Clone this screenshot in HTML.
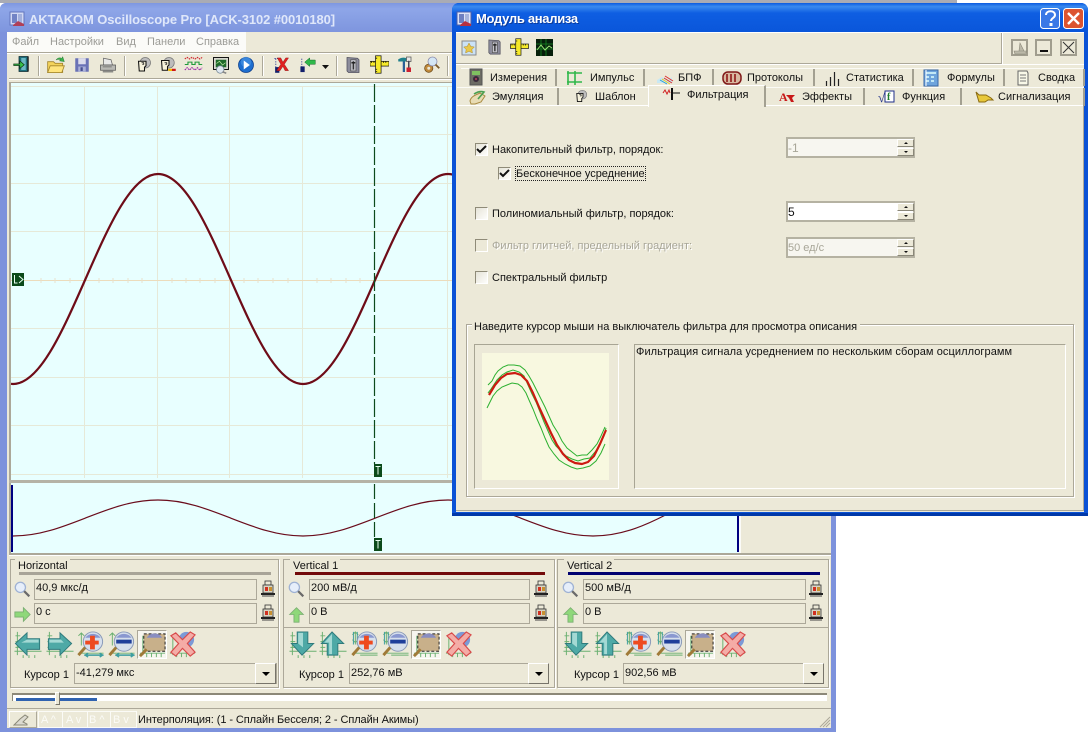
<!DOCTYPE html>
<html lang="ru"><head><meta charset="utf-8"><title>AKTAKOM Oscilloscope Pro</title>
<style>
html,body{margin:0;padding:0;background:#fff}
#r{position:relative;width:1090px;height:734px;overflow:hidden;background:#fff;font:11px/13px "Liberation Sans",sans-serif;color:#111}
.b{position:absolute;box-sizing:border-box}
.t{position:absolute;white-space:nowrap;font:11px/13px "Liberation Sans",sans-serif;color:#111}
.f{position:absolute;box-sizing:border-box;height:21px;border:1px solid #aca899;border-right-color:#aca899;background:#ece9d8}
.cb{position:absolute;box-sizing:border-box;width:13px;height:13px;border:1px solid;border-color:#8f8b78 #fff #fff #8f8b78;background:linear-gradient(135deg,#e6e4d8,#fdfdfb)}
.sp{position:absolute;box-sizing:border-box;width:129px;height:21px;border:2px solid #b5b2a2;background:#fff}
.ub{position:absolute;left:109px;width:17px;height:8px;box-sizing:border-box;background:#ece9d8;border:1px solid;border-color:#fff #8a8778 #8a8778 #fff}
.ub i{position:absolute;left:6px;width:0;height:0;border-left:2px solid transparent;border-right:2px solid transparent}
.u i{top:2px;border-bottom:2px solid #111}
.d i{top:2px;border-top:2px solid #111}
.sep{position:absolute;width:1px;background:#aca899;border-right:1px solid #fff}
.ts{position:absolute;width:2px;background:#a3a091}
.cbtn{position:absolute;box-sizing:border-box;width:21px;height:21px;background:#ece9d8;border:1px solid;border-color:#fff #77746a #77746a #fff}
.cbtn i{position:absolute;left:6px;top:8px;width:0;height:0;border-left:4px solid transparent;border-right:4px solid transparent;border-top:4px solid #000}
svg{position:absolute;left:0;top:0;overflow:visible}
</style></head><body><div id="r">

<!-- top strip -->
<div class="b" style="left:0;top:0;width:957px;height:3px;background:#a9abb4"></div>

<!-- MAIN WINDOW -->
<div class="b" style="left:0;top:3px;width:836px;height:729px;background:#7d92dc;border-radius:6px 6px 0 0"></div>
<div class="b" style="left:0;top:3px;width:836px;height:29px;background:linear-gradient(180deg,#7e97e0 0,#8ea6e8 20%,#7e95de 100%);border-radius:6px 6px 0 0"></div>
<div class="b" style="left:7px;top:32px;width:824px;height:696px;background:#ece9d8"></div>
<div class="t" style="left:29px;top:11px;font:bold 13px/18px 'Liberation Sans',sans-serif;color:#dfe7fa;letter-spacing:-.1px">AKTAKOM Oscilloscope Pro [ACK-3102 #0010180]</div>

<!-- menu -->
<div class="b" style="left:7px;top:32px;width:239px;height:20px;background:#fbfbf8"></div>
<div class="t" style="left:12px;top:36px;color:#9b9b96">Файл</div>
<div class="t" style="left:50px;top:36px;color:#9b9b96">Настройки</div>
<div class="t" style="left:116px;top:36px;color:#9b9b96">Вид</div>
<div class="t" style="left:147px;top:36px;color:#9b9b96">Панели</div>
<div class="t" style="left:196px;top:36px;color:#9b9b96">Справка</div>
<div class="b" style="left:7px;top:52px;width:824px;height:1px;background:#aca899"></div>
<div class="b" style="left:7px;top:53px;width:824px;height:1px;background:#fff"></div>
<div class="sep" style="left:38px;top:56px;height:20px"></div>
<div class="sep" style="left:124px;top:56px;height:20px"></div>
<div class="sep" style="left:262px;top:56px;height:20px"></div>
<div class="sep" style="left:336px;top:56px;height:20px"></div>
<div class="sep" style="left:447px;top:56px;height:20px"></div>

<!-- plot -->
<div class="b" style="left:9px;top:78px;width:822px;height:1px;background:#aca899"></div>
<div class="b" style="left:9px;top:79px;width:822px;height:1px;background:#fff"></div>
<div class="b" style="left:9px;top:82px;width:730px;height:398px;background:#e8ffff;border-top:1px solid #aca899;border-left:2px solid #aca899"></div>
<div class="b" style="left:9px;top:480px;width:730px;height:3px;background:#b5b3a6"></div>
<div class="b" style="left:9px;top:483px;width:730px;height:70px;background:#e8ffff;border-left:2px solid #aca899"></div>
<div class="b" style="left:11px;top:485px;width:2px;height:67px;background:#000080"></div>
<div class="b" style="left:737px;top:484px;width:2px;height:68px;background:#000080"></div>
<div class="b" style="left:739px;top:483px;width:2px;height:70px;background:#fbfbf8"></div>
<div class="b" style="left:9px;top:553px;width:822px;height:2px;background:#aca899"></div>
<div class="b" style="left:9px;top:555px;width:822px;height:1px;background:#fff"></div>

<svg width="1090" height="734" viewBox="0 0 1090 734">
<defs>
<symbol id="door" viewBox="0 0 24 24"><rect x="8" y="2" width="12" height="20" fill="#1d6f7d" stroke="#0c2a30"/><rect x="11" y="4" width="6" height="16" fill="#6db8c4"/><path d="M1 12h8V8l6 5-6 5v-4H1z" fill="#36c24a" stroke="#0f3a14"/><rect x="19" y="2" width="2" height="20" fill="#222"/></symbol>
<symbol id="folder" viewBox="0 0 24 24"><path d="M2 8h7l2 2h9v11H2z" fill="#f4d35a" stroke="#a4862a"/><path d="M2 21l3-8h17l-3 8z" fill="#ffe47c" stroke="#a4862a"/><path d="M12 6c2-3 5-3 7-2l1-2 2 6-6-1 2-1c-2-1-4-1-6 0z" fill="#38b04a" stroke="#1f6f2a" stroke-width=".5"/></symbol>
<symbol id="save" viewBox="0 0 24 24"><path d="M3 3h18v18H3z" fill="#6a72b6"/><rect x="7" y="3" width="10" height="8" fill="#dcdcec"/><rect x="7" y="14" width="10" height="7" fill="#aab0d8"/><rect x="10" y="15" width="3" height="5" fill="#464e90"/></symbol>
<symbol id="print" viewBox="0 0 24 24"><path d="M6 3l10 2 2 7H6z" fill="#e8e8e8" stroke="#666"/><path d="M2 12h20v7H2z" fill="#b8b8b4" stroke="#555"/><path d="M5 19h14v3H5z" fill="#8a8a86"/><rect x="5" y="14" width="12" height="1" fill="#666"/></symbol>
<symbol id="head" viewBox="0 0 24 24"><circle cx="15" cy="9" r="7" fill="#bdbdbd" stroke="#777"/><path d="M6 7h10v6l-2 2v5H7z" fill="#f6f2dc" stroke="#111" stroke-width="1.4"/><path d="M10 9h3v2h-2" fill="none" stroke="#111"/></symbol>
<symbol id="head2" viewBox="0 0 24 24"><circle cx="14" cy="9" r="7" fill="#bdbdbd" stroke="#777"/><path d="M4 6h10v6l-2 2v5H5z" fill="#f6f2dc" stroke="#111" stroke-width="1.4"/><path d="M8 9h3v2H9" fill="none" stroke="#111"/><rect x="13" y="17" width="5" height="3" fill="#f0b800"/><rect x="18" y="17" width="5" height="3" fill="#d01818"/></symbol>
<symbol id="waves" viewBox="0 0 24 24"><path d="M1 5l3-2 3 2 3-2 4 2 3-2 3 2 3-2" fill="none" stroke="#d0242c" stroke-width="1.4" stroke-dasharray="2 1"/><path d="M1 12h4V9h5v3h4V9h5v3h4" fill="none" stroke="#1f9a3a" stroke-width="1.4"/><path d="M1 19l3-3 3 3 3-3 4 3 3-3 3 3 3-3" fill="none" stroke="#9a27a8" stroke-width="1.4" stroke-dasharray="2 1"/></symbol>
<symbol id="mon" viewBox="0 0 24 24"><rect x="2" y="2" width="20" height="16" fill="#d8d8d0" stroke="#111" stroke-width="1.3"/><rect x="5" y="5" width="14" height="10" fill="#1f6a2a"/><path d="M6 10l4-3 4 5 4-3" stroke="#b8e8a0" fill="none"/><circle cx="11" cy="18" r="5" fill="#dfe8f0" stroke="#6c8090"/><path d="M14 21l5 2" stroke="#888" stroke-width="2"/></symbol>
<symbol id="play" viewBox="0 0 24 24"><circle cx="12" cy="12" r="10" fill="#1d6ecf" stroke="#0e3f8c"/><circle cx="12" cy="8" r="7" fill="#4c98e6" opacity=".6"/><path d="M9 6l8 6-8 6z" fill="#fff"/></symbol>
<symbol id="xr" viewBox="0 0 24 24"><path d="M4 3v18M2 3h6" stroke="#1a2a8c" stroke-dasharray="2 1.5"/><rect x="3" y="15" width="6" height="8" fill="#12206c"/><path d="M6 2l5 0 3 6 4-6h4l-6 9 6 9h-5l-3-6-4 6H5l6-9z" fill="#e02020" stroke="#801010" stroke-width=".5"/></symbol>
<symbol id="xg" viewBox="0 0 24 24"><path d="M4 3v18" stroke="#1a2a8c" stroke-dasharray="2 1.5"/><rect x="2" y="14" width="6" height="8" fill="#12206c"/><path d="M8 8l7-6v3h8v6h-8v3z" fill="#2fb84a" stroke="#156a28" stroke-width=".7"/></symbol>
<symbol id="panel" viewBox="0 0 24 24"><path d="M4 2l14 1 2 2v17H6l-2-2z" fill="#8d8d9c" stroke="#4e4e5c"/><rect x="9" y="5" width="7" height="15" fill="#c4c4cc" stroke="#555"/><rect x="11.5" y="7" width="2" height="11" fill="#333"/><rect x="10" y="8" width="5" height="2" fill="#222"/></symbol>
<symbol id="ruler" viewBox="0 0 24 24"><rect x="0" y="8" width="24" height="6" fill="#f6ea2a" stroke="#111" stroke-width=".9"/><rect x="7" y="1" width="7" height="22" fill="#f6ea2a" stroke="#111" stroke-width=".9"/><path d="M2 8v2M5 8v2M17 8v2M20 8v2M7 4h2M7 18h2M7 21h2" stroke="#111"/><rect x="8" y="9" width="5" height="4" fill="#f6ea2a"/></symbol>
<symbol id="tools" viewBox="0 0 24 24"><path d="M3 5c5-3 9-3 14 0v3H3z" fill="#20808c"/><rect x="14" y="2" width="6" height="6" fill="#e8e8e8" stroke="#555"/><rect x="9" y="8" width="3" height="14" fill="#2a5f96"/><rect x="16" y="7" width="2" height="10" fill="#445"/><rect x="14" y="16" width="6" height="6" fill="#cc1f2f"/></symbol>
<symbol id="mg" viewBox="0 0 24 24"><circle cx="9" cy="17" r="5.500" fill="#c08a3c" stroke="#6b4a18"/><circle cx="9" cy="17" r="2" fill="#ece9d8"/><circle cx="14" cy="8" r="6" fill="#d4e6f4" stroke="#88a"/><path d="M18 12l5 5" stroke="#7a5a2a" stroke-width="2.5"/></symbol>
<symbol id="robot" viewBox="0 0 16 18"><rect x="5" y="1" width="6" height="4" fill="#ece9d8" stroke="#333" stroke-width=".8"/><rect x="3" y="5" width="10" height="8" fill="#d8d4c4" stroke="#333" stroke-width=".8"/><rect x="5" y="7" width="3" height="4" fill="#d03020"/><rect x="9" y="7" width="3" height="4" fill="#c89030"/><rect x="1" y="13" width="14" height="2" fill="#222"/><path d="M2 16h12" stroke="#444"/></symbol>
<symbol id="mag" viewBox="0 0 20 20"><circle cx="7.500" cy="7.500" r="6" fill="#e6eefa" stroke="#9fb2d4" stroke-width="1.5"/><path d="M12 12l6 6" stroke="#6a6a6a" stroke-width="2.6"/></symbol>
<symbol id="arrR" viewBox="0 0 20 20"><path d="M1 7h10V2l8 8-8 8v-5H1z" fill="#8fd87a" stroke="#7aae72"/></symbol>
<symbol id="arrU" viewBox="0 0 20 20"><path d="M7 19V10H2l8-8 8 8h-5v9z" fill="#8fd87a" stroke="#7aae72"/></symbol>
<symbol id="grid" viewBox="0 0 30 30"><path d="M4 2v24M10 26v3M16 26v3M22 26v3M1 22h28" stroke="#6ab070" fill="none"/><path d="M2 6h5M2 12h5M2 18h5" stroke="#6ab070"/></symbol>
<symbol id="aL" viewBox="0 0 30 30"><use href="#grid" width="30" height="30"/><path d="M2 14L14 3v6h13v11H14v6z" fill="#4ea9a6" stroke="#2f7a7c"/><path d="M14 10h12v3H8z" fill="#a4d9d4"/></symbol>
<symbol id="aR" viewBox="0 0 30 30"><use href="#grid" width="30" height="30"/><path d="M27 14L15 3v6H3v11h12v6z" fill="#4ea9a6" stroke="#2f7a7c"/><path d="M4 10h12l3 3H4z" fill="#a4d9d4"/></symbol>
<symbol id="aD" viewBox="0 0 30 30"><use href="#grid" width="30" height="30"/><path d="M14 26L3 14h6V2h11v12h6z" fill="#4ea9a6" stroke="#2f7a7c"/><path d="M10 3h5v15l-5-4z" fill="#a4d9d4"/></symbol>
<symbol id="aU" viewBox="0 0 30 30"><use href="#grid" width="30" height="30"/><path d="M14 2L3 14h6v12h11V14h6z" fill="#4ea9a6" stroke="#2f7a7c"/><path d="M14 4l-8 9h5v12h3z" fill="#a4d9d4"/></symbol>
<symbol id="zp" viewBox="0 0 30 30"><path d="M5 3v13M2 6l3-3 3 3M3 24h25" stroke="#6ab070" fill="none"/><circle cx="17" cy="12" r="10" fill="#d6dfec" stroke="#8999b8"/><path d="M9 8a10 10 0 0 1 16 0z" fill="#8a98d0"/><path d="M14 11h-5v4h5v5h5v-5h4v-4h-4V6h-5z" fill="#ee4a20"/><path d="M9 18l-7 8" stroke="#a07a38" stroke-width="3"/><path d="M8 26h20M12 24l-3 2 3 2M24 24l3 2-3 2" stroke="#3c9da0" stroke-width="1.5" fill="none"/></symbol>
<symbol id="zm" viewBox="0 0 30 30"><path d="M5 3v13M2 6l3-3 3 3M3 24h25" stroke="#6ab070" fill="none"/><circle cx="17" cy="12" r="10" fill="#d6dfec" stroke="#8999b8"/><path d="M9 8a10 10 0 0 1 16 0z" fill="#8a98d0"/><rect x="9" y="10" width="16" height="4" fill="#1f3f9a"/><path d="M9 18l-7 8" stroke="#a07a38" stroke-width="3"/><path d="M8 26h20M12 24l-3 2 3 2M24 24l3 2-3 2" stroke="#3c9da0" stroke-width="1.5" fill="none"/></symbol>
<symbol id="zv" viewBox="0 0 30 30"><path d="M5 2v13M2 5l3-3 3 3M2 10l3 3 3-3M3 24h25" stroke="#6ab070" fill="none"/><path d="M3 2v13M7 2v13" stroke="#3c9da0"/><circle cx="17" cy="12" r="10" fill="#d6dfec" stroke="#8999b8"/><path d="M9 8a10 10 0 0 1 16 0z" fill="#8a98d0"/><path d="M14 11h-5v4h5v5h5v-5h4v-4h-4V6h-5z" fill="#ee4a20"/><path d="M9 18l-7 8" stroke="#a07a38" stroke-width="3"/><path d="M10 26h18" stroke="#6ab070"/></symbol>
<symbol id="zvm" viewBox="0 0 30 30"><path d="M5 2v13M2 5l3-3 3 3M2 10l3 3 3-3M3 24h25" stroke="#6ab070" fill="none"/><path d="M3 2v13M7 2v13" stroke="#3c9da0"/><circle cx="17" cy="12" r="10" fill="#d6dfec" stroke="#8999b8"/><path d="M9 8a10 10 0 0 1 16 0z" fill="#8a98d0"/><rect x="9" y="10" width="16" height="4" fill="#1f3f9a"/><path d="M9 18l-7 8" stroke="#a07a38" stroke-width="3"/><path d="M10 26h18" stroke="#6ab070"/></symbol>
<symbol id="zf" viewBox="0 0 30 30"><path d="M5 6v20M2 24h26M9 24v4M14 24v4M19 24v4M24 24v4" stroke="#6ab070" fill="none"/><rect x="6" y="4" width="22" height="18" fill="#c8b08a" stroke="#222" stroke-dasharray="3 2"/><path d="M9 8a9 8 0 0 1 16 0z" fill="#8a8ec0"/><path d="M9 20l-7 7" stroke="#a07a38" stroke-width="3"/></symbol>
<symbol id="zx" viewBox="0 0 30 30"><path d="M5 6v20M2 24h26M9 24v4M14 24v4M19 24v4" stroke="#6ab070" fill="none"/><circle cx="19" cy="10" r="8" fill="#7c9ad6"/><path d="M3 6l5-3 7 7 8-8 5 3-8 9 8 9-5 4-8-8-7 8-5-4 8-9z" fill="#f4aca6" stroke="#d84a4a" stroke-width="1.2"/></symbol>
</defs>

<!-- main grid -->
<g stroke="#e6e9d8" stroke-width="1" fill="none">
<path d="M84.5 86V478M157.5 86V478M229.5 86V478M302.5 86V478M447.5 86V478M520.5 86V478"/>
<path d="M11 86.5H520M11 134.5H520M11 183.5H520M11 231.5H520M11 328.5H520M11 377.5H520M11 425.5H520M11 474.5H520"/>
</g>
<path d="M11 280.5H520" stroke="#ecdcbc"/>
<path d="M41 278v5M55 278v5M70 278v5M99 278v5M113 278v5M128 278v5M142 278v5M172 278v5M186 278v5M200 278v5M215 278v5M244 278v5M258 278v5M273 278v5M288 278v5M317 278v5M331 278v5M346 278v5M360 278v5" stroke="#e8e0cc"/>
<!-- main curve -->
<path d="M11 383.8 13 384C39.24 384 61.85 332.8 85.5 279C109.15 225.2 131.76 174 158 174C184.24 174 206.85 225.2 230.5 279C254.15 332.8 276.76 384 303 384C329.24 384 351.85 332.8 375.5 279C399.15 225.2 421.76 174 448 174C474 174 497 225 520 279" fill="none" stroke="#6e0c18" stroke-width="2.2"/>
<!-- overview curve -->
<path d="M13 536C39.24 536 61.85 527.2 85.5 518C109.15 508.8 131.76 500 158 500C184.24 500 206.85 508.8 230.5 518C254.15 527.2 276.76 536 303 536C329.24 536 351.85 527.2 375.5 518C399.15 508.8 421.76 500 448 500C474.24 500 496.85 508.8 520.5 518C544.15 527.2 566.76 536 593 536C619.24 536 641.85 527.2 665.5 515" fill="none" stroke="#6a0c1c" stroke-width="1.2"/>
<!-- cursor -->
<path d="M374.5 84V464" stroke="#0c4a1c" stroke-width="1.2" stroke-dasharray="18 3"/>
<path d="M374.5 484V538" stroke="#0c4a1c" stroke-width="1.2" stroke-dasharray="15 4"/>
<rect x="374" y="464" width="8" height="13" fill="#0b4a1a"/>
<rect x="374" y="538" width="8" height="13" fill="#0b4a1a"/>
<path d="M375.5 466.5h5M378 466.5v8M375.5 540.5h5M378 540.5v8" stroke="#e8fff0" stroke-width="1"/>
<rect x="12" y="273" width="12" height="13" fill="#0b4a1a"/>
<path d="M14.5 275v8h3M19 276l4 3.500-4 3.500" stroke="#e8fff0" fill="none"/>

<!-- toolbar icons -->
<use href="#door" x="13" y="55" width="18" height="18"/>
<use href="#folder" x="46" y="55" width="20" height="20"/>
<use href="#save" x="73" y="56" width="18" height="18"/>
<use href="#print" x="99" y="56" width="18" height="18"/>
<use href="#head" x="134" y="56" width="18" height="18"/>
<use href="#head2" x="158" y="56" width="19" height="18"/>
<use href="#waves" x="184" y="55" width="19" height="19"/>
<use href="#mon" x="212" y="56" width="18" height="18"/>
<use href="#play" x="237" y="56" width="18" height="18"/>
<use href="#xr" x="273" y="56" width="17" height="18"/>
<use href="#xg" x="299" y="56" width="17" height="18"/>
<path d="M322 65h7l-3.500 4z" fill="#111"/>
<use href="#panel" x="344" y="56" width="18" height="18"/>
<use href="#ruler" x="370" y="55" width="19" height="19"/>
<use href="#tools" x="396" y="55" width="18" height="19"/>
<use href="#mg" x="422" y="55" width="18" height="19"/>

<!-- panels icons -->
<g>
<use href="#mag" x="14" y="581" width="17" height="17"/><use href="#arrR" x="14" y="606" width="17" height="17"/>
<use href="#mag" x="288" y="581" width="17" height="17"/><use href="#arrU" x="288" y="606" width="17" height="17"/>
<use href="#mag" x="562" y="581" width="17" height="17"/><use href="#arrU" x="562" y="606" width="17" height="17"/>
<use href="#robot" x="260" y="580" width="16" height="18"/><use href="#robot" x="260" y="604" width="16" height="18"/>
<use href="#robot" x="533" y="580" width="16" height="18"/><use href="#robot" x="533" y="604" width="16" height="18"/>
<use href="#robot" x="808" y="580" width="16" height="18"/><use href="#robot" x="808" y="604" width="16" height="18"/>
</g>
</svg>

<div id="groups">
<div class="b" style="left:10px;top:559px;width:269px;height:129px;border:1px solid #aca899;box-shadow:1px 1px 0 #fff"></div>
<div class="b" style="left:283px;top:559px;width:272px;height:129px;border:1px solid #aca899;box-shadow:1px 1px 0 #fff"></div>
<div class="b" style="left:557px;top:559px;width:272px;height:129px;border:1px solid #aca899;box-shadow:1px 1px 0 #fff"></div>
<div class="b" style="left:11px;top:627px;width:267px;height:1px;background:#aca899"></div>
<div class="b" style="left:284px;top:627px;width:270px;height:1px;background:#aca899"></div>
<div class="b" style="left:558px;top:627px;width:270px;height:1px;background:#aca899"></div>
<div class="b" style="left:15px;top:559px;width:55px;height:12px;background:#ece9d8"></div>
<div class="b" style="left:290px;top:559px;width:50px;height:12px;background:#ece9d8"></div>
<div class="b" style="left:564px;top:559px;width:50px;height:12px;background:#ece9d8"></div>
<div class="t" style="left:18px;top:560px">Horizontal</div>
<div class="t" style="left:293px;top:560px">Vertical 1</div>
<div class="t" style="left:567px;top:560px">Vertical 2</div>
<div class="b" style="left:19px;top:572px;width:252px;height:3px;background:#a8a498"></div>
<div class="b" style="left:295px;top:572px;width:250px;height:3px;background:#720a0a"></div>
<div class="b" style="left:568px;top:572px;width:252px;height:3px;background:#000070"></div>

<div class="f" style="left:34px;top:579px;width:223px"></div><div class="t" style="left:36px;top:582px">40,9 мкс/д</div>
<div class="f" style="left:34px;top:603px;width:223px"></div><div class="t" style="left:36px;top:606px">0 с</div>
<div class="f" style="left:309px;top:579px;width:221px"></div><div class="t" style="left:311px;top:582px">200 мВ/д</div>
<div class="f" style="left:309px;top:603px;width:221px"></div><div class="t" style="left:311px;top:606px">0 В</div>
<div class="f" style="left:583px;top:579px;width:223px"></div><div class="t" style="left:585px;top:582px">500 мВ/д</div>
<div class="f" style="left:583px;top:603px;width:223px"></div><div class="t" style="left:585px;top:606px">0 В</div>

<div class="b" style="left:137px;top:630px;width:30px;height:29px;background:#f7f6ef;border:1px solid;border-color:#aca899 #fff #fff #aca899"></div>
<div class="b" style="left:411px;top:630px;width:30px;height:29px;background:#f7f6ef;border:1px solid;border-color:#aca899 #fff #fff #aca899"></div>
<div class="b" style="left:685px;top:630px;width:30px;height:29px;background:#f7f6ef;border:1px solid;border-color:#aca899 #fff #fff #aca899"></div>

<div class="t" style="left:24px;top:669px">Курсор 1</div>
<div class="f" style="left:74px;top:663px;width:203px"></div><div class="t" style="left:76px;top:667px">-41,279 мкс</div><div class="cbtn" style="left:255px;top:663px"><i></i></div>
<div class="t" style="left:299px;top:669px">Курсор 1</div>
<div class="f" style="left:349px;top:663px;width:200px"></div><div class="t" style="left:351px;top:667px">252,76 мВ</div><div class="cbtn" style="left:528px;top:663px"><i></i></div>
<div class="t" style="left:574px;top:669px">Курсор 1</div>
<div class="f" style="left:623px;top:663px;width:201px"></div><div class="t" style="left:625px;top:667px">902,56 мВ</div><div class="cbtn" style="left:803px;top:663px"><i></i></div>
</div>

<svg width="1090" height="734" viewBox="0 0 1090 734">
<use href="#aL" x="13" y="630" width="30" height="29"/><use href="#aR" x="45" y="630" width="30" height="29"/><use href="#zp" x="76" y="630" width="30" height="29"/><use href="#zm" x="107" y="630" width="30" height="29"/><use href="#zf" x="138" y="630" width="29" height="29"/><use href="#zx" x="168" y="630" width="29" height="29"/>
<use href="#aD" x="288" y="630" width="30" height="29"/><use href="#aU" x="318" y="630" width="30" height="29"/><use href="#zv" x="350" y="630" width="30" height="29"/><use href="#zvm" x="381" y="630" width="30" height="29"/><use href="#zf" x="412" y="630" width="29" height="29"/><use href="#zx" x="444" y="630" width="29" height="29"/>
<use href="#aD" x="562" y="630" width="30" height="29"/><use href="#aU" x="593" y="630" width="30" height="29"/><use href="#zv" x="624" y="630" width="30" height="29"/><use href="#zvm" x="655" y="630" width="30" height="29"/><use href="#zf" x="686" y="630" width="29" height="29"/><use href="#zx" x="718" y="630" width="29" height="29"/>
</svg>

<!-- slider -->
<div class="b" style="left:12px;top:693px;width:815px;height:8px;background:#fff;border-top:2px solid #8c8878;border-left:1px solid #8c8878"></div>
<div class="b" style="left:16px;top:698px;width:81px;height:3px;background:#2f62b0"></div>
<div class="b" style="left:55px;top:692px;width:5px;height:13px;background:#ece9d8;border:1px solid;border-color:#fff #77746a #77746a #fff"></div>

<!-- status -->
<div class="b" style="left:7px;top:708px;width:824px;height:1px;background:#aca899"></div>
<div class="b" style="left:9px;top:711px;width:28px;height:17px;border:1px solid;border-color:#fff #aca899 #aca899 #fff"></div>
<svg width="1090" height="734" viewBox="0 0 1090 734"><path d="M14 725l6-6 5-4 3 2-5 5 4 2v1z" fill="#dcdad0" stroke="#8a8878"/>
<g stroke="#fbfbf7" fill="none"><path d="M38.500 711.500h98v16h-98zM62.500 711v16M87.500 711v16M110.500 711v16"/></g>
<path d="M823 727l7-7M826 727l4-4M820 727l10-10" stroke="#aca899"/></svg>
<div class="t" style="left:41px;top:714px;color:#fbfbf7">A ^</div><div class="t" style="left:66px;top:714px;color:#fbfbf7">A v</div><div class="t" style="left:89px;top:714px;color:#fbfbf7">B ^</div><div class="t" style="left:113px;top:714px;color:#fbfbf7">B v</div>
<div class="t" style="left:138px;top:714px;letter-spacing:-.08px">Интерполяция: (1 - Сплайн Бесселя; 2 - Сплайн Акимы)</div>

<!-- DIALOG -->
<div class="b" style="left:452px;top:3px;width:636px;height:513px;background:#0a52d6;border-radius:7px 7px 0 0;border-bottom:3px solid #0038a8"></div>
<div class="b" style="left:452px;top:3px;width:636px;height:29px;background:linear-gradient(180deg,#0a5adf 0,#3a8aef 12%,#0e5ee2 35%,#0a56da 100%);border-radius:7px 7px 0 0"></div>
<div class="b" style="left:456px;top:32px;width:628px;height:480px;background:#ece9d8"></div>
<div class="t" style="left:476px;top:10px;font:bold 13px/18px 'Liberation Sans',sans-serif;color:#fff;letter-spacing:-.3px;text-shadow:1px 1px 0 #0a3a9c">Модуль анализа</div>

<svg width="1090" height="734" viewBox="0 0 1090 734">
<g id="wi"><rect x="457" y="12" width="14" height="13" fill="#dfe3f6" stroke="#4d5fa8"/><rect x="459" y="14" width="5" height="9" fill="#6e7fc0"/><rect x="465" y="14" width="4" height="9" fill="#a8b4dc"/><path d="M460 25l5-4 6 3v2h-11z" fill="#b83040"/></g>
<g opacity=".85"><rect x="10" y="12" width="14" height="13" fill="#dfe3f6" stroke="#5d6fb8"/><rect x="12" y="14" width="5" height="9" fill="#6e7fc0"/><rect x="18" y="14" width="4" height="9" fill="#a8b4dc"/><path d="M13 25l5-4 6 3v2H13z" fill="#b83040"/></g>
<rect x="1040.500" y="8.500" width="19" height="20" rx="3" fill="#3a78e6" stroke="#fff"/>
<path d="M1046 15c0-5 9-5 9 0 0 3-4 3-4 6" fill="none" stroke="#fff" stroke-width="2"/><rect x="1049.500" y="23" width="3" height="3" fill="#fff"/>
<rect x="1063.500" y="8.500" width="20" height="20" rx="3" fill="#dc5430" stroke="#fff"/>
<path d="M1068 13l11 11M1079 13l-11 11" stroke="#fff" stroke-width="2.400"/>
<rect x="462" y="41" width="14" height="14" fill="#cbe2f6" stroke="#8a8a8a"/><path d="M469 43l1.800 3.500 3.500.5-2.500 2.500.6 3.500-3.400-1.800-3.400 1.800.6-3.500-2.500-2.500 3.500-.5z" fill="#e8c84a" stroke="#b08a20" stroke-width=".5"/>
<use href="#panel" x="486" y="38" width="17" height="18"/>
<use href="#ruler" x="510" y="38" width="19" height="18"/>
<rect x="536" y="39" width="17" height="17" fill="#071f0b"/>
<path d="M536 44h17M536 49h17M541 39v17M546 39v17" stroke="#158a22" stroke-width=".8"/><path d="M537 50l4-5 4 5 4-4 3 2" stroke="#9de878" fill="none"/>
<rect x="1012" y="40" width="15" height="15" fill="#ece9d8" stroke="#a09d8e" stroke-width="2"/><path d="M1014 51h13l-2 3h-10zM1020 43l4 8h-5z" fill="#bbb8a8" stroke="#8a8778" stroke-width=".6"/>
<rect x="1036" y="40" width="15" height="15" fill="#ece9d8" stroke="#a09d8e" stroke-width="2"/><rect x="1040" y="50" width="8" height="2" fill="#111"/>
<rect x="1061" y="40" width="15" height="15" fill="#ece9d8" stroke="#a09d8e" stroke-width="2"/><path d="M1063 42l11 11M1074 42l-11 11" stroke="#333"/>
</svg>

<div class="b" style="left:456px;top:32px;width:628px;height:1px;background:#fff"></div>
<div class="b" style="left:456px;top:63px;width:545px;height:1px;background:#aca899"></div>
<div class="b" style="left:456px;top:64px;width:628px;height:1px;background:#fff"></div>
<div class="b" style="left:1001px;top:33px;width:1px;height:31px;background:#aca899"></div>
<div class="b" style="left:1002px;top:33px;width:1px;height:31px;background:#fff"></div>

<!-- tabs -->
<div class="b" style="left:461px;top:68px;width:622px;height:1px;background:#fbfbf6"></div>
<div class="b" style="left:457px;top:87px;width:627px;height:1px;background:#fbfbf6"></div>
<div class="ts" style="left:555px;top:69px;height:17px"></div>
<div class="ts" style="left:643px;top:69px;height:17px"></div>
<div class="ts" style="left:712px;top:69px;height:17px"></div>
<div class="ts" style="left:813px;top:69px;height:17px"></div>
<div class="ts" style="left:912px;top:69px;height:17px"></div>
<div class="ts" style="left:1003px;top:69px;height:17px"></div>
<div class="ts" style="left:1083px;top:69px;height:17px"></div>
<div class="ts" style="left:557px;top:88px;height:17px"></div>
<div class="ts" style="left:863px;top:88px;height:17px"></div>
<div class="ts" style="left:960px;top:88px;height:17px"></div>
<div class="ts" style="left:1083px;top:88px;height:18px"></div>
<div class="b" style="left:457px;top:105px;width:191px;height:1px;background:#fff"></div>
<div class="b" style="left:766px;top:105px;width:317px;height:1px;background:#fff"></div>
<div class="b" style="left:648px;top:85px;width:118px;height:22px;background:#ece9d8;border-top:1px solid #fff;border-left:1px solid #fff;border-right:2px solid #a3a091"></div>
<div class="b" style="left:1083px;top:106px;width:1px;height:405px;background:#aca899"></div>
<div class="b" style="left:456px;top:510px;width:628px;height:1px;background:#aca899"></div>

<div class="t" style="left:490px;top:72px">Измерения</div>
<div class="t" style="left:590px;top:72px">Импульс</div>
<div class="t" style="left:678px;top:72px">БПФ</div>
<div class="t" style="left:747px;top:72px">Протоколы</div>
<div class="t" style="left:846px;top:72px">Статистика</div>
<div class="t" style="left:947px;top:72px">Формулы</div>
<div class="t" style="left:1038px;top:72px">Сводка</div>
<div class="t" style="left:492px;top:91px">Эмуляция</div>
<div class="t" style="left:595px;top:91px">Шаблон</div>
<div class="t" style="left:687px;top:89px">Фильтрация</div>
<div class="t" style="left:802px;top:91px">Эффекты</div>
<div class="t" style="left:902px;top:91px">Функция</div>
<div class="t" style="left:998px;top:91px">Сигнализация</div>

<svg width="1090" height="734" viewBox="0 0 1090 734">
<rect x="470" y="69" width="12" height="16" fill="#6c6c64" stroke="#555"/><rect x="472" y="71" width="8" height="4" fill="#7fc060"/><circle cx="476" cy="79" r="3" fill="#3a2a3a"/><circle cx="476" cy="79" r="1" fill="#c04060"/>
<path d="M568 71v14M575 71v14M567 73h15M567 82h15" stroke="#30b84a" stroke-width="1.600" fill="none"/>
<path d="M657 80l5-3 5 4 5-4v6h-15z" fill="#c8e8f4"/><path d="M664 78l8 5M665 76l8 5" stroke="#d83030"/><path d="M662 79l8 5" stroke="#e8c820"/><path d="M660 80l7 4" stroke="#30a0d0"/>
<rect x="723" y="72" width="18" height="12" rx="5" fill="#d8b8a0" stroke="#801818" stroke-width="1.500"/><path d="M727 74v8M731 74v8M735 74v8" stroke="#901818" stroke-width="1.600"/>
<path d="M826.500 86v-5M830.500 86v-9M834.500 86v-14M838.500 86v-7" stroke="#222" stroke-width="1.200"/>
<rect x="924" y="70" width="14" height="16" fill="#6ea4dc" stroke="#3868a8"/><path d="M926 73h10M926 77h3M931 77h3M926 81h3M931 81h3" stroke="#dff" stroke-width="1.400"/><path d="M926 70v16" stroke="#fff"/>
<path d="M1018 71h9l1 2v12h-10z" fill="#f8f8e8" stroke="#666"/><path d="M1020 75h6M1020 78h6M1020 81h6" stroke="#777"/>
<path d="M470 101c1-5 6-6 10-8l5 3-4 6-6 2h-4z" fill="#e8dcb4" stroke="#a88a40"/><path d="M474 94c3-2 7-3 10-2l-6 7" fill="none" stroke="#4aa050" stroke-width="1.600"/>
<use href="#head" x="573" y="89" width="15" height="15"/>
<path d="M663 93l2-3 2 4 2-4 1 3" stroke="#d02020" fill="none"/><rect x="671" y="88" width="2" height="12" fill="#111"/><path d="M671 93h9" stroke="#111"/>
<text x="779" y="101" font-family="Liberation Serif,serif" font-weight="bold" font-size="12" fill="#c81818">A</text><path d="M786 95h9l-3 3 2 4h-3l-2-4z" fill="#c81818"/>
<text x="878" y="102" font-family="Liberation Serif,serif" font-weight="bold" font-size="13" fill="#1f2f8a">√</text><rect x="885" y="91" width="9" height="11" fill="#fff" stroke="#1f2f8a"/><text x="887" y="100" font-family="Liberation Serif,serif" font-weight="bold" font-size="10" fill="#1a7a2a">f</text>
<path d="M976 92l3 3h7l5 3 2 2h-5l-3 2h-6z" fill="#e8c83a" stroke="#8a6a10"/>
</svg>

<!-- form -->
<div class="cb" style="left:475px;top:143px"></div>
<div class="t" style="left:492px;top:144px">Накопительный фильтр, порядок:</div>
<div class="cb" style="left:498px;top:167px"></div>
<div class="b" style="left:515px;top:166px;width:131px;height:15px;border:1px dotted #222"></div>
<div class="t" style="left:516px;top:168px">Бесконечное усреднение</div>
<div class="cb" style="left:475px;top:207px"></div>
<div class="t" style="left:492px;top:208px">Полиномиальный фильтр, порядок:</div>
<div class="cb" style="left:475px;top:239px;background:#ece9d8"></div>
<div class="t" style="left:492px;top:240px;color:#a8a698;text-shadow:1px 1px 0 #fff">Фильтр глитчей, предельный градиент:</div>
<div class="cb" style="left:475px;top:271px"></div>
<div class="t" style="left:492px;top:272px">Спектральный фильтр</div>

<div class="sp" style="left:786px;top:137px;background:#f7f6f0"><div class="t" style="left:0;top:3px;font-size:12px;color:#a8a698">-1</div><div class="ub u" style="top:0"><i></i></div><div class="ub d" style="top:9px"><i></i></div></div>
<div class="sp" style="left:786px;top:201px"><div class="t" style="left:0;top:3px;font-size:12px">5</div><div class="ub u" style="top:0"><i></i></div><div class="ub d" style="top:9px"><i></i></div></div>
<div class="sp" style="left:786px;top:237px;background:#f7f6f0"><div class="t" style="left:0;top:3px;color:#a8a698">50 ед/с</div><div class="ub u" style="top:0"><i></i></div><div class="ub d" style="top:9px"><i></i></div></div>

<svg width="1090" height="734" viewBox="0 0 1090 734"><g fill="none" stroke="#111" stroke-width="2"><path d="M477 149l3 3 6-6"/><path d="M500 173l3 3 6-6"/></g></svg>

<!-- description group -->
<div class="b" style="left:466px;top:324px;width:608px;height:173px;border:1px solid #aca899;box-shadow:1px 1px 0 #fff, inset 1px 1px 0 #fff"></div>
<div class="b" style="left:472px;top:320px;width:388px;height:13px;background:#ece9d8"></div>
<div class="t" style="left:474px;top:321px">Наведите курсор мыши на выключатель фильтра для просмотра описания</div>
<div class="b" style="left:474px;top:344px;width:145px;height:145px;border:1px solid;border-color:#a8a594 #fff #fff #a8a594"></div>
<div class="b" style="left:482px;top:353px;width:127px;height:127px;background:#f8f8e0"></div>
<div class="b" style="left:634px;top:344px;width:432px;height:145px;border:1px solid;border-color:#a8a594 #fff #fff #a8a594"></div>
<div class="t" style="left:636px;top:346px;letter-spacing:.08px">Фильтрация сигнала усреднением по нескольким сборам осциллограмм</div>

<svg width="1090" height="734" viewBox="0 0 1090 734">
<g fill="none" stroke="#2cb030" stroke-width="1">
<polyline points="488,385 492,381 495,375 498,371 503,367 508,365 514,365 520,366 525,370 529,376 533,383 537,391 541,399 545,407 549,416 553,425 558,433 562,441 567,448 572,452 577,456 582,455 587,455 592,450 597,444 601,436 605,427"/>
<polyline points="488,393 491,389 493,386 497,380 502,375 507,372 513,370 519,372 524,376 528,385 532,394 536,402 540,412 544,422 548,431 552,440 556,446 561,451 566,456 572,459 578,461 584,459 590,458 595,452 600,445 604,436 606,428"/>
<polyline points="487,408 490,402 493,396 497,391 502,387 507,385 512,383 518,384 522,387 526,393 529,400 533,409 537,419 541,428 545,438 549,447 554,454 559,460 565,464 571,467 577,469 583,468 590,466 596,461 601,453 605,444"/>
</g>
<polyline points="489,395 495,385 501,378 507,374 515,373 521,375 527,381 533,393 539,407 545,420 551,433 557,445 563,454 569,460 575,463 582,464 588,462 594,456 600,444 606,430" fill="none" stroke="#cc1a10" stroke-width="2.200" stroke-linejoin="round"/>
</svg>

</div></body></html>
